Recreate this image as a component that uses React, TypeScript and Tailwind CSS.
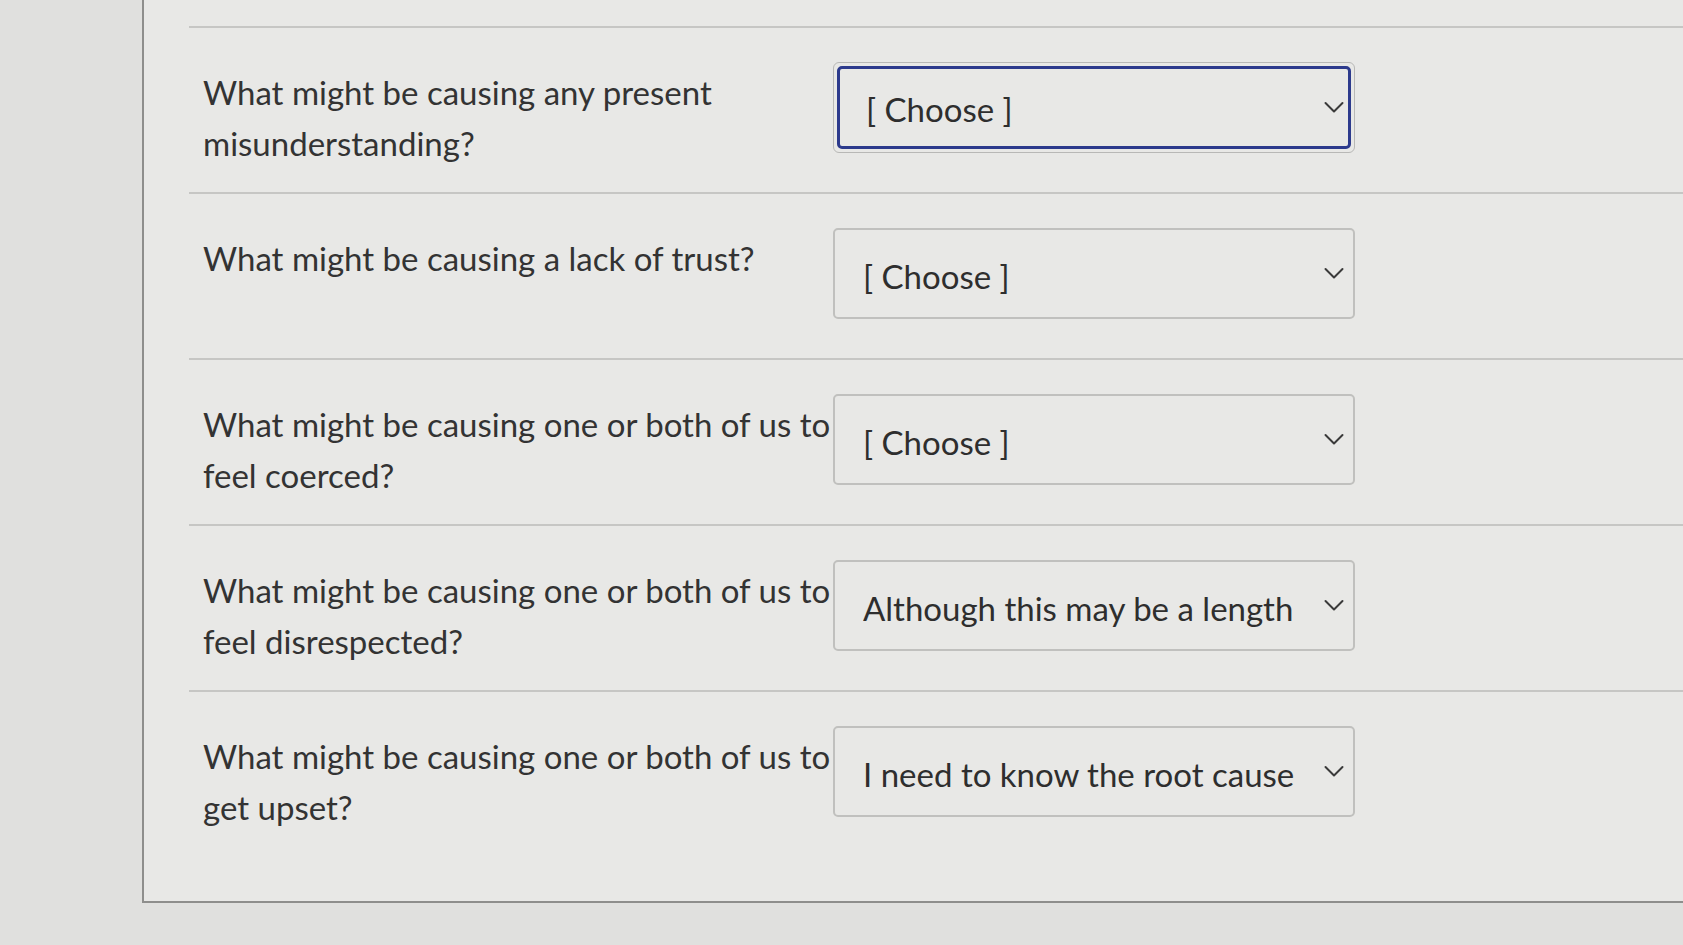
const ROWS = [
  { q: "What might be causing any present misunderstanding?", value: "[ Choose ]", focused: true },
  { q: "What might be causing a lack of trust?", value: "[ Choose ]" },
  { q: "What might be causing one or both of us to feel coerced?", value: "[ Choose ]" },
  { q: "What might be causing one or both of us to feel disrespected?", value: "Although this may be a length" },
  { q: "What might be causing one or both of us to get upset?", value: "I need to know the root cause" },
];

function Chevron() {
  return (
    <svg width="22" height="13" viewBox="0 0 22 13" fill="none" className="shrink-0">
      <path d="M2.5 2 L11 10.5 L19.5 2" stroke="#3a3a3a" strokeWidth="2" strokeLinecap="round" strokeLinejoin="round" />
    </svg>
  );
}

function Dropdown({ value, focused }: { value: string; focused?: boolean }) {
  if (focused) {
    return (
      <div className="w-[522px] h-[91px] shrink-0 rounded-[6px] border border-[#b8b8b6] p-[3px]">
        <div className="flex h-full items-center justify-between rounded-[5px] border-[3px] border-[#2c3a8c] pl-[26px] pr-[3px]">
          <span className="pt-[5px] text-[33px] text-[#2e2e2e] whitespace-nowrap">{value}</span>
          <Chevron />
        </div>
      </div>
    );
  }
  return (
    <div className="flex w-[522px] h-[91px] shrink-0 items-center justify-between rounded-[5px] border-2 border-[#c0c0be] pl-[28px] pr-[8px]">
      <span className="pt-[6px] text-[33px] text-[#2e2e2e] whitespace-nowrap overflow-hidden">{value}</span>
      <Chevron />
    </div>
  );
}

export default function App() {
  return (
    <div
      className="min-h-[945px] w-[1683px] overflow-hidden bg-[#e0e0de] pl-[142px] text-[#333]"
      style={{ fontFamily: "Lato, 'Open Sans', sans-serif" }}
    >
      <div className="h-[903px] border-l-2 border-b-2 border-[#8e8e8c] bg-[#e8e8e6] pl-[45px] pt-[26px]">
        {ROWS.map((row) => (
          <div key={row.q} className="flex h-[166px] items-start border-t-2 border-[#c6c6c4] pt-[34px]">
            <div className="w-[644px] shrink-0 pl-[14px] pt-[5px] text-[33px] leading-[51px]">{row.q}</div>
            <Dropdown value={row.value} focused={row.focused} />
          </div>
        ))}
      </div>
    </div>
  );
}
